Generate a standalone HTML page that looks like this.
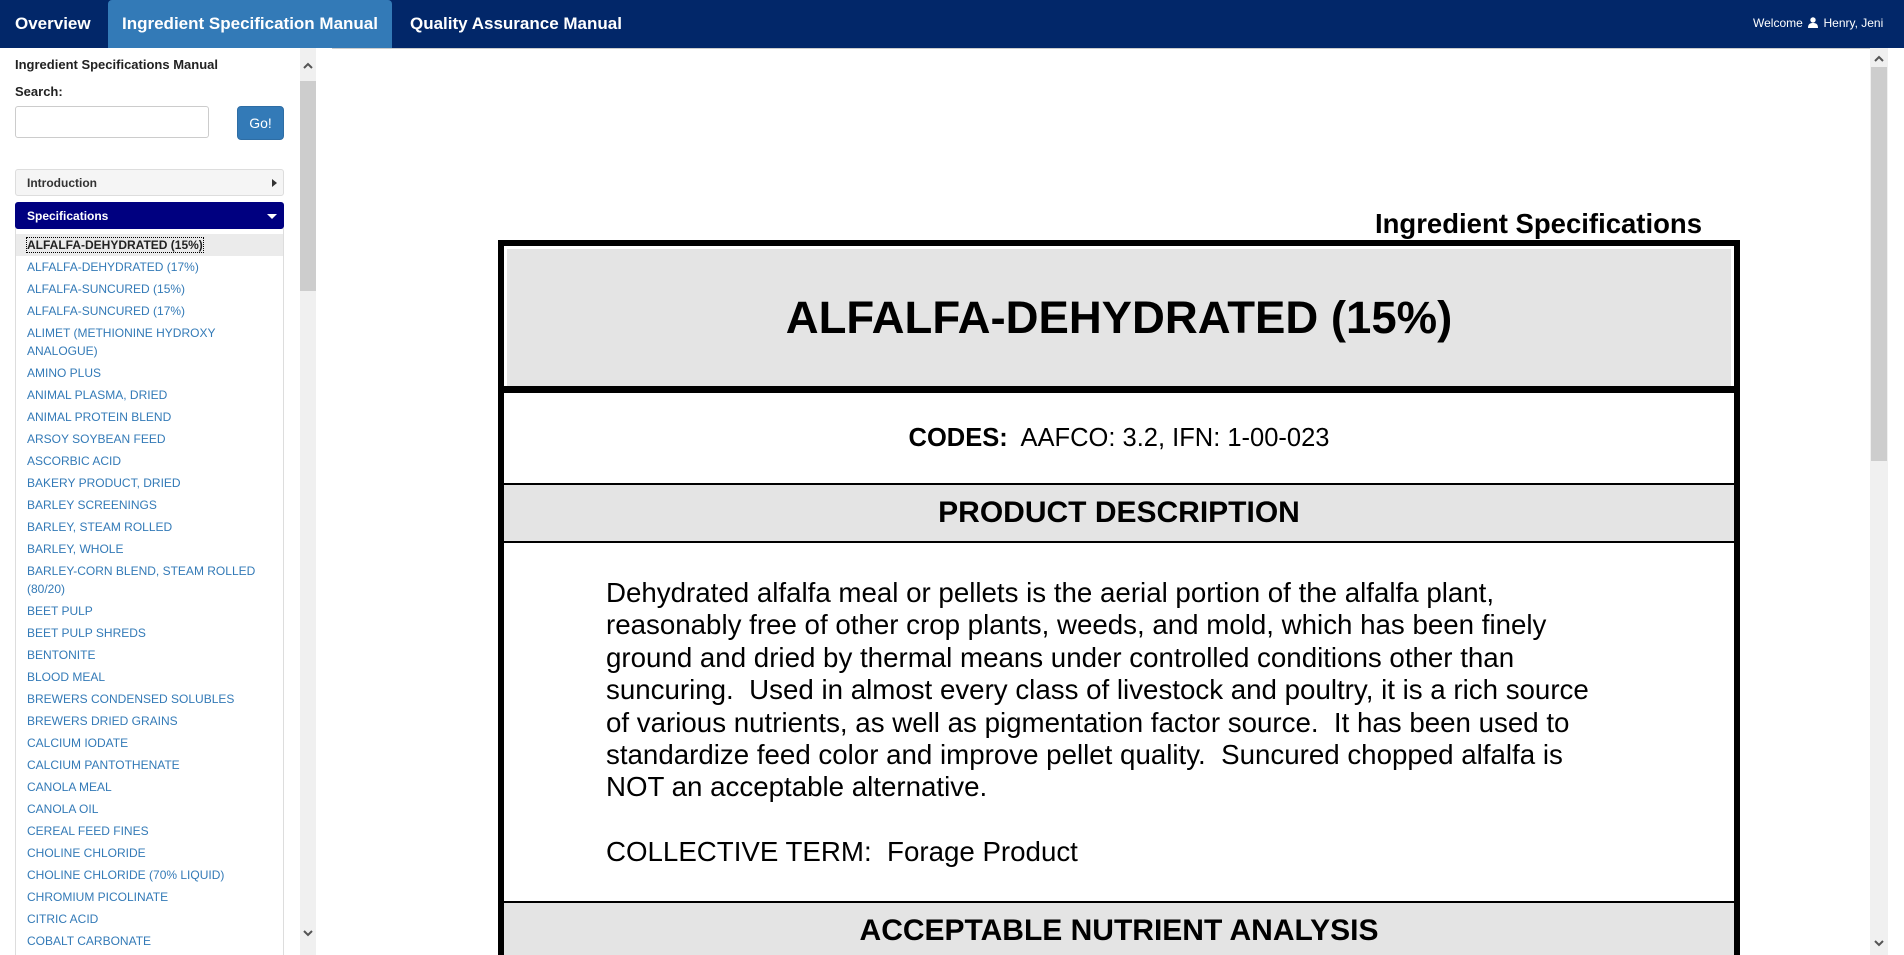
<!DOCTYPE html>
<html><head><meta charset="utf-8"><style>
*{box-sizing:border-box;margin:0;padding:0}
html,body{width:1904px;height:955px;overflow:hidden;background:#fff;font-family:"Liberation Sans",Arial,sans-serif}
#wrap{position:relative;width:1904px;height:955px;overflow:hidden}
.nav{position:absolute;left:0;top:0;width:1904px;height:48px;background:#022769;color:#fff}
.nav .t{position:absolute;top:0;height:48px;line-height:48px;font-size:17px;font-weight:bold}
.nav .act{background:#337ab7;border-radius:4px 4px 0 0}
.welcome{position:absolute;left:1753px;top:0;line-height:46px;font-size:12px;color:#fff;white-space:nowrap}
.sb{position:absolute;left:300px;top:48px;width:16px;height:907px;background:#f0f0f0}
.sb .th{position:absolute;left:0;top:33px;width:16px;height:210px;background:#cdcdcd}
.h1{position:absolute;left:15px;top:57px;font-size:13px;font-weight:bold;color:#222}
.lbl{position:absolute;left:15px;top:84px;font-size:13px;font-weight:bold;color:#222}
.inp{position:absolute;left:15px;top:106px;width:194px;height:32px;border:1px solid #ccc;border-radius:3px}
.go{position:absolute;left:237px;top:106px;width:47px;height:34px;background:#337ab7;border:1px solid #2e6da4;border-radius:4px;color:#fff;font-size:14px;text-align:center;line-height:32px}
.pan{position:absolute;left:15px;width:269px;height:27px;font-size:12px;font-weight:bold;line-height:27px;padding-left:11px;border:1px solid #ddd;border-radius:3px}
.list{position:absolute;left:15px;top:228px;width:269px;height:727px;border:1px solid #ddd;border-top:none;border-bottom:none;padding-top:6px;overflow:hidden}
.list div{font-size:12px;line-height:18px;padding:2px 0 2px 11px;color:#337ab7}
.list div.a{background:#ebebeb;color:#222;font-weight:bold}
.list div.a span{outline:1px dotted #000}
.msb{position:absolute;left:1870px;top:48px;width:18px;height:907px;background:#f0f0f0}
.msb .th{position:absolute;left:1px;top:19px;width:16px;height:394px;background:#cdcdcd}
.ttl{position:absolute;right:202px;top:208px;font-size:27.5px;font-weight:bold;color:#000}
.box{position:absolute;left:498px;top:240px;width:1242px;height:715px;border:6px solid #000;border-bottom:none;overflow:hidden}
.c{position:absolute;left:0;width:1230px;text-align:center;color:#000}
</style></head><body><div id="wrap">
<div class="nav">
<div class="t" style="left:15px">Overview</div>
<div class="t act" style="left:108px;width:284px;text-align:center">Ingredient Specification Manual</div>
<div class="t" style="left:410px">Quality Assurance Manual</div>
<div class="welcome">Welcome <svg width="10" height="11" viewBox="0 0 10 11" style="vertical-align:-1px;margin:0 2px"><circle cx="5" cy="3" r="2.7" fill="#fff"/><path d="M0 11 C0 7 2 6 5 6 C8 6 10 7 10 11Z" fill="#fff"/></svg> Henry, Jeni</div>
</div>
<div style="position:absolute;left:332px;top:48px;width:1538px;height:1px;background:#ccc"></div>
<div class="h1">Ingredient Specifications Manual</div>
<div class="lbl">Search:</div>
<div class="inp"></div>
<div class="go">Go!</div>
<div class="pan" style="top:169px;background:#f5f5f5;color:#333">Introduction<span style="position:absolute;right:6px;top:9px;border-left:5px solid #333;border-top:4px solid transparent;border-bottom:4px solid transparent"></span></div>
<div class="pan" style="top:202px;background:#000080;color:#fff;border-color:#000080">Specifications<span style="position:absolute;right:6px;top:11px;border-top:5px solid #fff;border-left:5px solid transparent;border-right:5px solid transparent"></span></div>
<div class="list">
<div class="a"><span>ALFALFA-DEHYDRATED (15%)</span></div>
<div>ALFALFA-DEHYDRATED (17%)</div>
<div>ALFALFA-SUNCURED (15%)</div>
<div>ALFALFA-SUNCURED (17%)</div>
<div>ALIMET (METHIONINE HYDROXY<br>ANALOGUE)</div>
<div>AMINO PLUS</div>
<div>ANIMAL PLASMA, DRIED</div>
<div>ANIMAL PROTEIN BLEND</div>
<div>ARSOY SOYBEAN FEED</div>
<div>ASCORBIC ACID</div>
<div>BAKERY PRODUCT, DRIED</div>
<div>BARLEY SCREENINGS</div>
<div>BARLEY, STEAM ROLLED</div>
<div>BARLEY, WHOLE</div>
<div>BARLEY-CORN BLEND, STEAM ROLLED<br>(80/20)</div>
<div>BEET PULP</div>
<div>BEET PULP SHREDS</div>
<div>BENTONITE</div>
<div>BLOOD MEAL</div>
<div>BREWERS CONDENSED SOLUBLES</div>
<div>BREWERS DRIED GRAINS</div>
<div>CALCIUM IODATE</div>
<div>CALCIUM PANTOTHENATE</div>
<div>CANOLA MEAL</div>
<div>CANOLA OIL</div>
<div>CEREAL FEED FINES</div>
<div>CHOLINE CHLORIDE</div>
<div>CHOLINE CHLORIDE (70% LIQUID)</div>
<div>CHROMIUM PICOLINATE</div>
<div>CITRIC ACID</div>
<div>COBALT CARBONATE</div>
</div>
<div class="sb"><div class="th"></div>
<svg style="position:absolute;left:3px;top:14px" width="10" height="7" viewBox="0 0 10 7"><path d="M1 6 L5 2 L9 6" stroke="#555" stroke-width="2" fill="none"/></svg>
<svg style="position:absolute;left:3px;top:882px" width="10" height="7" viewBox="0 0 10 7"><path d="M1 1 L5 5 L9 1" stroke="#555" stroke-width="2" fill="none"/></svg></div>
<div class="msb"><div class="th"></div>
<svg style="position:absolute;left:4px;top:7px" width="10" height="7" viewBox="0 0 10 7"><path d="M1 6 L5 2 L9 6" stroke="#555" stroke-width="2" fill="none"/></svg>
<svg style="position:absolute;left:4px;top:892px" width="10" height="7" viewBox="0 0 10 7"><path d="M1 1 L5 5 L9 1" stroke="#555" stroke-width="2" fill="none"/></svg></div>
<div class="ttl">Ingredient Specifications</div>
<div class="box">
<div class="c" style="top:3px;height:137px;background:#e4e4e4;line-height:137px;font-size:45.5px;font-weight:bold;left:3px;width:1224px">ALFALFA-DEHYDRATED (15%)</div>
<div style="position:absolute;left:0;top:140px;width:1230px;height:7px;background:#000"></div>
<div class="c" style="top:147px;height:90px;line-height:90px;font-size:25.5px"><b>CODES:</b>&nbsp; AAFCO: 3.2, IFN: 1-00-023</div>
<div style="position:absolute;left:0;top:237px;width:1230px;height:2px;background:#000"></div>
<div class="c" style="top:239px;height:56px;line-height:56px;font-size:30px;font-weight:bold;background:#e4e4e4">PRODUCT DESCRIPTION</div>
<div style="position:absolute;left:0;top:295px;width:1230px;height:2px;background:#000"></div>
<div style="position:absolute;left:102px;top:331px;white-space:nowrap;font-size:27.7px;line-height:32.4px;color:#000">Dehydrated alfalfa meal or pellets is the aerial portion of the alfalfa plant,<br>reasonably free of other crop plants, weeds, and mold, which has been finely<br>ground and dried by thermal means under controlled conditions other than<br>suncuring.&nbsp; Used in almost every class of livestock and poultry, it is a rich source<br>of various nutrients, as well as pigmentation factor source.&nbsp; It has been used to<br>standardize feed color and improve pellet quality.&nbsp; Suncured chopped alfalfa is<br>NOT an acceptable alternative.<br><br>COLLECTIVE TERM:&nbsp; Forage Product</div>
<div style="position:absolute;left:0;top:655px;width:1230px;height:2px;background:#000"></div>
<div class="c" style="top:657px;height:60px;line-height:56px;font-size:30px;font-weight:bold;background:#e4e4e4">ACCEPTABLE NUTRIENT ANALYSIS</div>
</div>
</div></body></html>
